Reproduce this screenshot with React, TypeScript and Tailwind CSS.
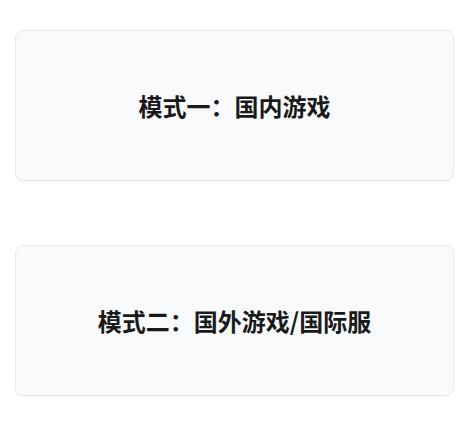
export default function App() {
  const modes = ["模式一：国内游戏", "模式二：国外游戏/国际服"];

  return (
    <div className="min-h-[430px] bg-white px-[15px] pt-[30px] flex flex-col gap-[64px]" style={{ fontFamily: '"Noto Sans CJK SC", "Noto Sans", sans-serif' }}>
      {modes.map((label) => (
        <button
          key={label}
          className="h-[151px] w-[439px] rounded-lg border border-[#e8eaee] bg-[#f9fafc] flex items-center justify-center text-[24px] font-bold text-[#1a1a1a] shadow-[0_1px_2px_rgba(0,0,0,0.04)]"
        >
          {label}
        </button>
      ))}
    </div>
  );
}
